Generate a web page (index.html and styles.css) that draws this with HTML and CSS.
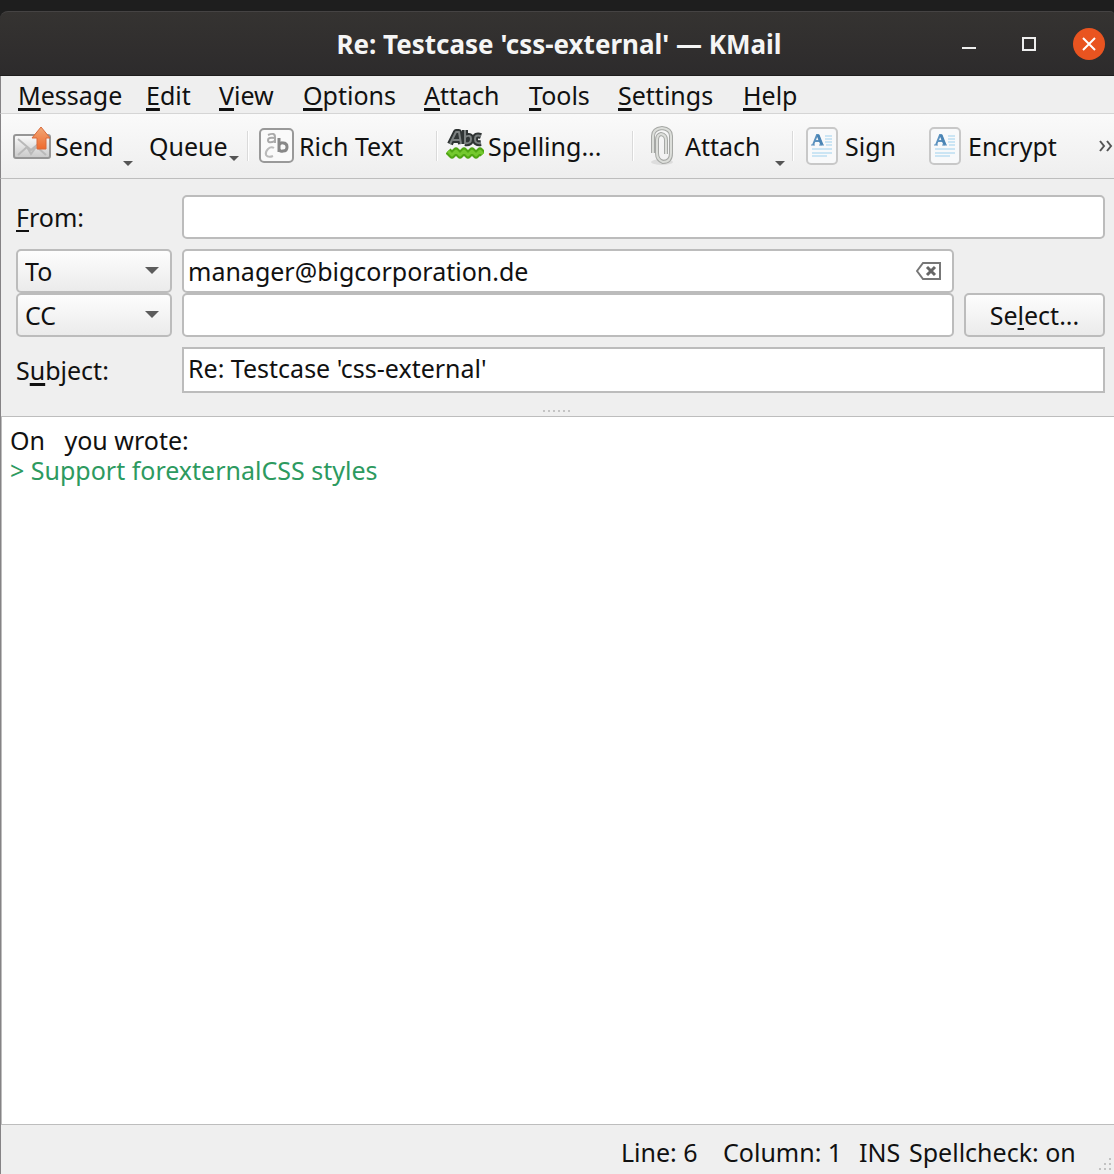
FILE: index.html
```html
<!DOCTYPE html>
<html lang="en">
<head>
<meta charset="utf-8">
<meta name="viewport" content="width=device-width, initial-scale=1">
<title>Re: Testcase 'css-external' — KMail</title>
<link rel="stylesheet" href="styles.css">
</head>
<body>
<svg class="defs" width="0" height="0" aria-hidden="true">
  <defs>
    <linearGradient id="paper" x1="0" y1="0" x2="0" y2="1"><stop offset="0" stop-color="#fbfbfb"/><stop offset="1" stop-color="#c9c9c9"/></linearGradient>
    <linearGradient id="arrow" x1="0" y1="0" x2="0" y2="1"><stop offset="0" stop-color="#f0a878"/><stop offset="1" stop-color="#f06a2c"/></linearGradient>
    <symbol id="doc" viewBox="0 0 34 40">
      <rect x="2" y="2" width="30" height="36" rx="4" fill="#f8f9fa" stroke="#c8c8c8" stroke-width="2"/>
      <path d="M8 19l4-10h1l4 10M10 15h6" fill="none" stroke="#5c92bf" stroke-width="2"/>
      <path d="M13 9l4 10" stroke="#4a84b4" stroke-width="3"/>
      <path d="M6 19h4M14 19h5" stroke="#5c92bf" stroke-width="1"/>
      <path d="M20 10h7M20 13h7M20 16h7M21 19h6M7 23h20M7 27h20M7 30h15" stroke="#cbe5f4" stroke-width="2"/>
    </symbol>
  </defs>
</svg>
<div class="window">
  <header class="titlebar">
    <h1 class="title">Re: Testcase 'css-external' — KMail</h1>
    <div class="window-controls">
      <button class="control" type="button" aria-label="Minimize"><svg width="16" height="16"><path d="M1 12h14" stroke="#eee" stroke-width="2"/></svg></button>
      <button class="control" type="button" aria-label="Maximize"><svg width="16" height="16"><rect x="2" y="2" width="12" height="12" fill="none" stroke="#eee" stroke-width="2"/></svg></button>
      <button class="control close" type="button" aria-label="Close"><svg width="16" height="16"><path d="M2 2l12 12M14 2L2 14" stroke="#fff" stroke-width="2"/></svg></button>
    </div>
  </header>

  <nav class="menubar" aria-label="Main menu">
    <button type="button"><u>M</u>essage</button>
    <button type="button"><u>E</u>dit</button>
    <button type="button"><u>V</u>iew</button>
    <button type="button"><u>O</u>ptions</button>
    <button type="button"><u>A</u>ttach</button>
    <button type="button"><u>T</u>ools</button>
    <button type="button"><u>S</u>ettings</button>
    <button type="button"><u>H</u>elp</button>
  </nav>

  <div class="toolbar" role="toolbar" aria-label="Main toolbar">
    <button class="tool drop" type="button">
      <svg width="38" height="40" viewBox="0 0 38 40" aria-hidden="true">
        <rect x="1" y="9" width="36" height="23" rx="2" fill="url(#paper)" stroke="#969696" stroke-width="2"/>
        <path d="M5 13l13 11 13-11M5 29l9-8M33 29l-9-8M14 21l4 7 5-7" fill="none" stroke="#b9b9b9" stroke-width="2"/>
        <path d="M28 1l9 11h-4v11h-9V12h-5z" fill="url(#arrow)" stroke="#d96b3c"/>
      </svg>
      <span>Send</span>
    </button>
    <button class="tool drop raised" type="button"><span>Queue</span></button>
    <span class="separator"></span>
    <button class="tool" type="button">
      <svg width="36" height="38" viewBox="0 0 36 38" aria-hidden="true">
        <rect x="1" y="2" width="33" height="33" rx="4" fill="#fafafa" stroke="#999" stroke-width="2"/>
        <path d="M9 8q7-3 7 2v6M16 11q-7-1-7 2 0 4 7 1" fill="none" stroke="#aaa" stroke-width="2"/>
        <path d="M15 21q-3-2-6 1-3 3-2 6 2 3 7 1" fill="none" stroke="#bbb" stroke-width="2"/>
        <path d="M20 11v14M20 18q2-3 4-2 4 0 4 4t-4 4q-3 1-4-2" fill="none" stroke="#888" stroke-width="3"/>
      </svg>
      <span>Rich Text</span>
    </button>
    <span class="separator"></span>
    <button class="tool" type="button">
      <svg width="38" height="40" viewBox="0 0 38 40" aria-hidden="true">
        <g fill="none" stroke-linejoin="round">
          <path id="abc" d="M4 18l6-12h3l2 12M7 14h7M19 4v14M19 11q6-3 6 2 0 5-6 4M35 10q-6-2-6 3 0 5 6 4" stroke="#2f3434" stroke-width="6"/>
          <path d="M4 18l6-12h3l2 12M7 14h7M19 4v14M19 11q6-3 6 2 0 5-6 4M35 10q-6-2-6 3 0 5 6 4" stroke="#7b8080" stroke-width="2"/>
          <path d="M2 25l4 4 4-4 4 4 4-4 4 4 4-4 4 4 4-4 3 3" stroke="#4fa513" stroke-width="7"/>
          <path d="M2 25l4 4 4-4 4 4 4-4 4 4 4-4 4 4 4-4 3 3" stroke="#74c92e" stroke-width="3"/>
        </g>
      </svg>
      <span>Spelling...</span>
    </button>
    <span class="separator"></span>
    <button class="tool clip drop" type="button">
      <svg width="24" height="40" viewBox="0 0 24 40" aria-hidden="true">
        <ellipse cx="12" cy="36" rx="11" ry="3" fill="#ddd"/>
        <path d="M3 27V10q0-7 9-8 9 1 9 8v17q0 9-8 9-6-2-6-9V14q0-5 4-6 5 1 5 6v14" fill="none" stroke="#a6a8a5" stroke-width="4"/>
        <path d="M3 27V10q0-7 9-8 9 1 9 8v17q0 9-8 9-6-2-6-9V14q0-5 4-6 5 1 5 6v14" fill="none" stroke="#dcdeda" stroke-width="2"/>
      </svg>
      <span>Attach</span>
    </button>
    <span class="separator"></span>
    <button class="tool document" type="button"><svg width="34" height="40" aria-hidden="true"><use href="#doc"/></svg><span>Sign</span></button>
    <button class="tool document" type="button"><svg width="34" height="40" aria-hidden="true"><use href="#doc"/></svg><span>Encrypt</span></button>
    <button class="more" type="button" aria-label="More tools"><svg width="16" height="16"><path d="M2 3l4 5-4 5M9 3l4 5-4 5" fill="none" stroke="#555" stroke-width="2"/></svg></button>
  </div>

  <main class="composer">
    <form class="headers">
      <label for="from"><u>F</u>rom:</label>
      <input class="field wide" id="from" type="text">

      <div class="recipients">
        <span class="combo"><select aria-label="First recipient type"><option>To</option><option>CC</option><option>BCC</option></select></span>
        <div class="clearable"><input class="field" type="text" aria-label="To address" value="manager@bigcorporation.de">
          <button class="clear" type="button" aria-label="Clear"><svg width="26" height="20"><path d="M1 10l6-8h17v16H7z" fill="none" stroke="#777" stroke-width="2"/><path d="M11 6l8 8M19 6l-8 8" stroke="#666" stroke-width="3"/></svg></button>
        </div>
        <span></span>
        <span class="combo"><select aria-label="Second recipient type"><option>CC</option><option>To</option><option>BCC</option></select></span>
        <input class="field" type="text" aria-label="CC address">
        <button class="select" type="button">Se<u>l</u>ect...</button>
      </div>

      <label class="heavy" for="subject">S<u>u</u>bject:</label>
      <input class="field wide square" id="subject" type="text" value="Re: Testcase 'css-external'">
    </form>
    <div class="splitter" role="separator"></div>
    <div class="editor" contenteditable="true" role="textbox" aria-multiline="true" aria-label="Message body" spellcheck="false"><p>On   you wrote:</p><p class="quote">&gt; Support forexternalCSS styles</p></div>
  </main>

  <footer class="statusbar">
    <span class="line">Line: 6</span>
    <span class="column">Column: 1</span>
    <span class="mode">INS</span>
    <span class="spell">Spellcheck: on</span>
    <svg class="grip" width="16" height="16" aria-hidden="true"><path d="M11 1h2M6 6h2M11 6h2M1 11h2M6 11h2M11 11h2" stroke="#c2c2c2" stroke-width="2"/></svg>
  </footer>
</div>
</body>
</html>
```
FILE: styles.css
```css
* { box-sizing: border-box; }

body {
  margin: 0;
  background: #1e1e1e;
  color: #111;
  font: 25px/30px "Noto Sans", "Open Sans", sans-serif;
}

button, input, select { font: inherit; color: inherit; }
button { border: 0; padding: 0; background: none; text-align: left; white-space: nowrap; }
svg { display: block; flex: none; }
.defs { position: absolute; }

u {
  text-decoration-thickness: 3px;
  text-underline-offset: 3px;
  text-decoration-skip-ink: none;
}

.window {
  display: flex;
  flex-direction: column;
  min-height: 100vh;
  padding-top: 11px;
}

.titlebar {
  display: grid;
  grid-template-columns: 1fr auto 1fr;
  align-items: center;
  height: 65px;
  padding-left: 4px;
  border-top: 1px solid #454343;
  border-bottom: 1px solid #1e1d1d;
  border-radius: 8px 4px 0 0;
  background: linear-gradient(#353331, #2d2b2c);
}
.title {
  grid-column: 2;
  margin: 0;
  color: #f5f5f5;
  font-size: 26px;
  font-weight: bold;
  line-height: 30px;
  white-space: nowrap;
}
.window-controls { display: flex; justify-content: flex-end; gap: 28px; padding-right: 9px; }
.control { display: grid; place-items: center; width: 32px; height: 32px; border-radius: 50%; }
.close { background: #e95420; }

.menubar {
  display: grid;
  grid-template-columns: 128px 73px 84px 121px 105px 89px 125px 1fr;
  height: 38px;
  padding: 4px 17px;
  border-left: 1px solid #858385;
  border-bottom: 1px solid #d5d5d5;
  background: #efefef;
}

.toolbar {
  display: grid;
  grid-template-columns: 136px 98px 12px 177px 10px 186px 18px 142px 13px 123px 1fr 16px;
  align-items: center;
  height: 65px;
  padding-left: 12px;
  border-left: 1px solid #858385;
  border-bottom: 1px solid #bdbdbd;
  background: linear-gradient(#fafafa, #eee);
}
.tool { position: relative; display: flex; align-items: center; gap: 4px; }
.drop::after {
  content: "";
  position: absolute;
  right: 16px;
  bottom: 0;
  border: 5px solid transparent;
  border-top-color: #555;
  border-bottom: 0;
}
.raised::after { right: 8px; }
.clip { gap: 11px; }
.clip::after { right: 7px; }
.document { gap: 6px; }
.separator { width: 2px; height: 30px; border-left: 1px solid #dadada; background: #fff; }
.more { justify-self: end; }

.composer { display: flex; flex: 1; flex-direction: column; border-left: 1px solid #858385; background: #efefef; }

.headers {
  display: grid;
  grid-template-columns: 156px 1fr;
  gap: 10px 10px;
  align-items: center;
  padding: 16px 9px 17px 15px;
}
.headers u { text-decoration-thickness: 2px; }
.headers .heavy u { text-decoration-thickness: 3px; }
.field {
  width: 100%;
  height: 44px;
  padding: 0 4px;
  border: 2px solid #bcbcbc;
  border-radius: 5px;
  background: #fff;
}
.square { height: 46px; padding-bottom: 4px; border-radius: 0; }
.recipients {
  display: grid;
  grid-column: 1 / -1;
  grid-template-columns: 156px 1fr 141px;
  column-gap: 10px;
}
.combo { position: relative; }
.combo select {
  width: 100%;
  height: 44px;
  padding: 0 7px;
  border: 2px solid #bcbcbc;
  border-radius: 5px;
  appearance: none;
  background: linear-gradient(#fdfdfd, #ebebeb);
}
.combo::after {
  content: "";
  position: absolute;
  top: 18px;
  right: 13px;
  border: 7px solid transparent;
  border-top-color: #5c5c5c;
  border-bottom: 0;
  pointer-events: none;
}
.clearable { position: relative; }
.clear { position: absolute; top: 12px; right: 12px; }
.select { height: 44px; border: 2px solid #bcbcbc; border-radius: 5px; background: linear-gradient(#fdfdfd, #ebebeb); text-align: center; }

.splitter {
  width: 30px;
  height: 2px;
  margin: 0 auto 4px;
  background: repeating-linear-gradient(90deg, #c4c4c4 0 2px, transparent 2px 5px);
}
.editor {
  flex: 1;
  padding: 8px;
  border: 1px solid #bdbdbd;
  border-right: 0;
  outline: 0;
  background: #fff;
  white-space: pre-wrap;
}
.editor p { margin: 0; }
.quote { color: #2d9a5f; }

.statusbar {
  position: relative;
  display: grid;
  grid-template-columns: 1fr 136px 50px 169px 20px;
  align-items: center;
  height: 49px;
  padding: 4px 16px 0 0;
  border-left: 1px solid #858385;
  background: #efefef;
  white-space: nowrap;
}
.line { justify-self: end; width: 102px; }
.grip { position: absolute; right: 0; bottom: 0; }
```
